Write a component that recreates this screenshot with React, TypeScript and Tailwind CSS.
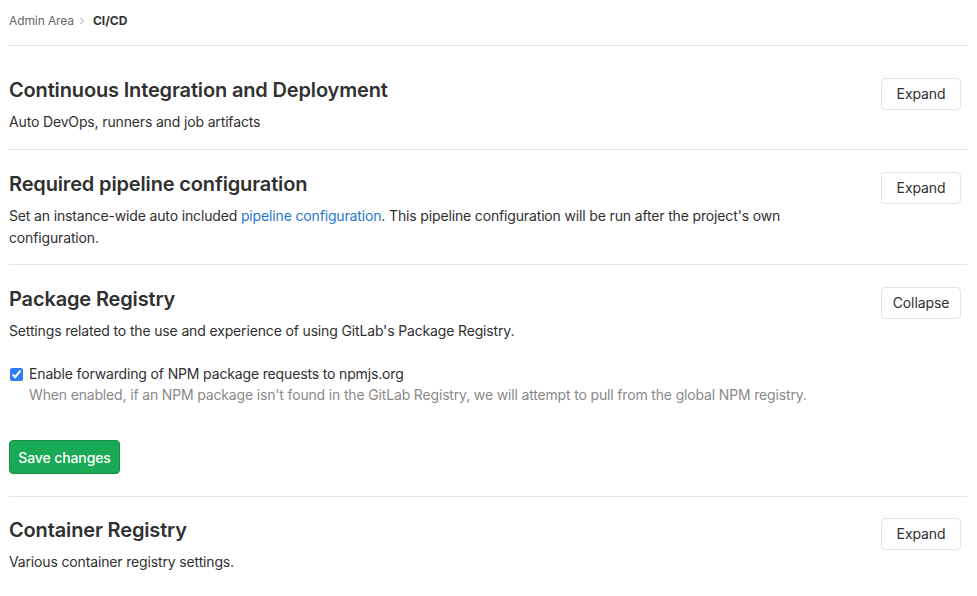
import React, { useState } from "react";

const font = { fontFamily: "Inter, 'Liberation Sans', sans-serif" };

function SettingsButton({ label }: { label: string }) {
  return (
    <button className="mr-[6px] h-[32px] w-[80px] shrink-0 rounded-[4px] border border-[#e3e3e3] bg-white pb-[1px] text-[14px] tracking-[-0.1px] text-[#303030]">
      {label}
    </button>
  );
}

export default function App() {
  const [forwarding, setForwarding] = useState(true);

  return (
    <div className="min-h-[596px] bg-white text-[#303030]" style={font}>
      <div className="ml-[9px] w-[958px]">
        {/* Breadcrumb */}
        <div className="flex h-[46px] items-center gap-[5px] border-b border-[#e5e5e5] pb-[4px] text-[12px]">
          <span className="tracking-[-0.1px] text-[#666]">Admin Area</span>
          <svg width="6" height="8" viewBox="0 0 6 8" className="mr-[3px]">
            <path d="M1.5 1l3 3-3 3" fill="none" stroke="#999" strokeWidth="1" />
          </svg>
          <span className="font-bold text-[#303030]">CI/CD</span>
        </div>

        {/* Continuous Integration */}
        <section className="flex items-start justify-between border-b border-[#e5e5e5] pb-[16px] pt-[32px]">
          <div>
            <h4 className="text-[20px] font-semibold leading-[24px] tracking-[-0.15px]">
              Continuous Integration and Deployment
            </h4>
            <p className="mt-[9px] text-[14px] leading-[22px] tracking-[-0.15px]">
              Auto DevOps, runners and job artifacts
            </p>
          </div>
          <SettingsButton label="Expand" />
        </section>

        {/* Required pipeline */}
        <section className="flex items-start justify-between border-b border-[#e5e5e5] pb-[15px] pt-[22px]">
          <div className="w-[790px]">
            <h4 className="text-[20px] font-semibold leading-[24px] tracking-[-0.15px]">
              Required pipeline configuration
            </h4>
            <p className="mt-[9px] text-[14px] leading-[22px] tracking-[-0.15px]">
              Set an instance-wide auto included <a className="text-[#1f78d1]">pipeline configuration</a>. This
              pipeline configuration will be run after the project's own configuration.
            </p>
          </div>
          <SettingsButton label="Expand" />
        </section>

        {/* Package Registry */}
        <section className="border-b border-[#e5e5e5] pb-[22px] pt-[22px]">
          <div className="flex items-start justify-between">
            <div>
              <h4 className="text-[20px] font-semibold leading-[24px] tracking-[-0.15px]">Package Registry</h4>
              <p className="mt-[9px] text-[14px] leading-[22px] tracking-[-0.15px]">
                Settings related to the use and experience of using GitLab's Package Registry.
              </p>
            </div>
            <SettingsButton label="Collapse" />
          </div>

          <div className="mt-[21px] flex items-start gap-[6px] pl-[1px]">
            <input
              type="checkbox"
              checked={forwarding}
              onChange={(e) => setForwarding(e.target.checked)}
              className="mt-[5px] h-[13px] w-[13px] accent-[#2f7cf6]"
            />
            <div className="leading-[21px]">
              <div className="text-[14px] tracking-[-0.15px]">
                Enable forwarding of NPM package requests to npmjs.org
              </div>
              <div className="text-[14px] tracking-[-0.16px] text-[#8a8a8a]">
                When enabled, if an NPM package isn't found in the GitLab Registry, we will attempt to pull
                from the global NPM registry.
              </div>
            </div>
          </div>

          <button className="mt-[35px] h-[34px] w-[111px] rounded-[4px] border border-[#168f48] bg-[#1aaa55] text-[14px] font-medium tracking-[-0.1px] text-white">
            Save changes
          </button>
        </section>

        {/* Container Registry */}
        <section className="flex items-start justify-between pb-[16px] pt-[21px]">
          <div>
            <h4 className="text-[20px] font-semibold leading-[24px] tracking-[-0.15px]">Container Registry</h4>
            <p className="mt-[9px] text-[14px] leading-[22px] tracking-[-0.15px]">
              Various container registry settings.
            </p>
          </div>
          <SettingsButton label="Expand" />
        </section>
      </div>
    </div>
  );
}
